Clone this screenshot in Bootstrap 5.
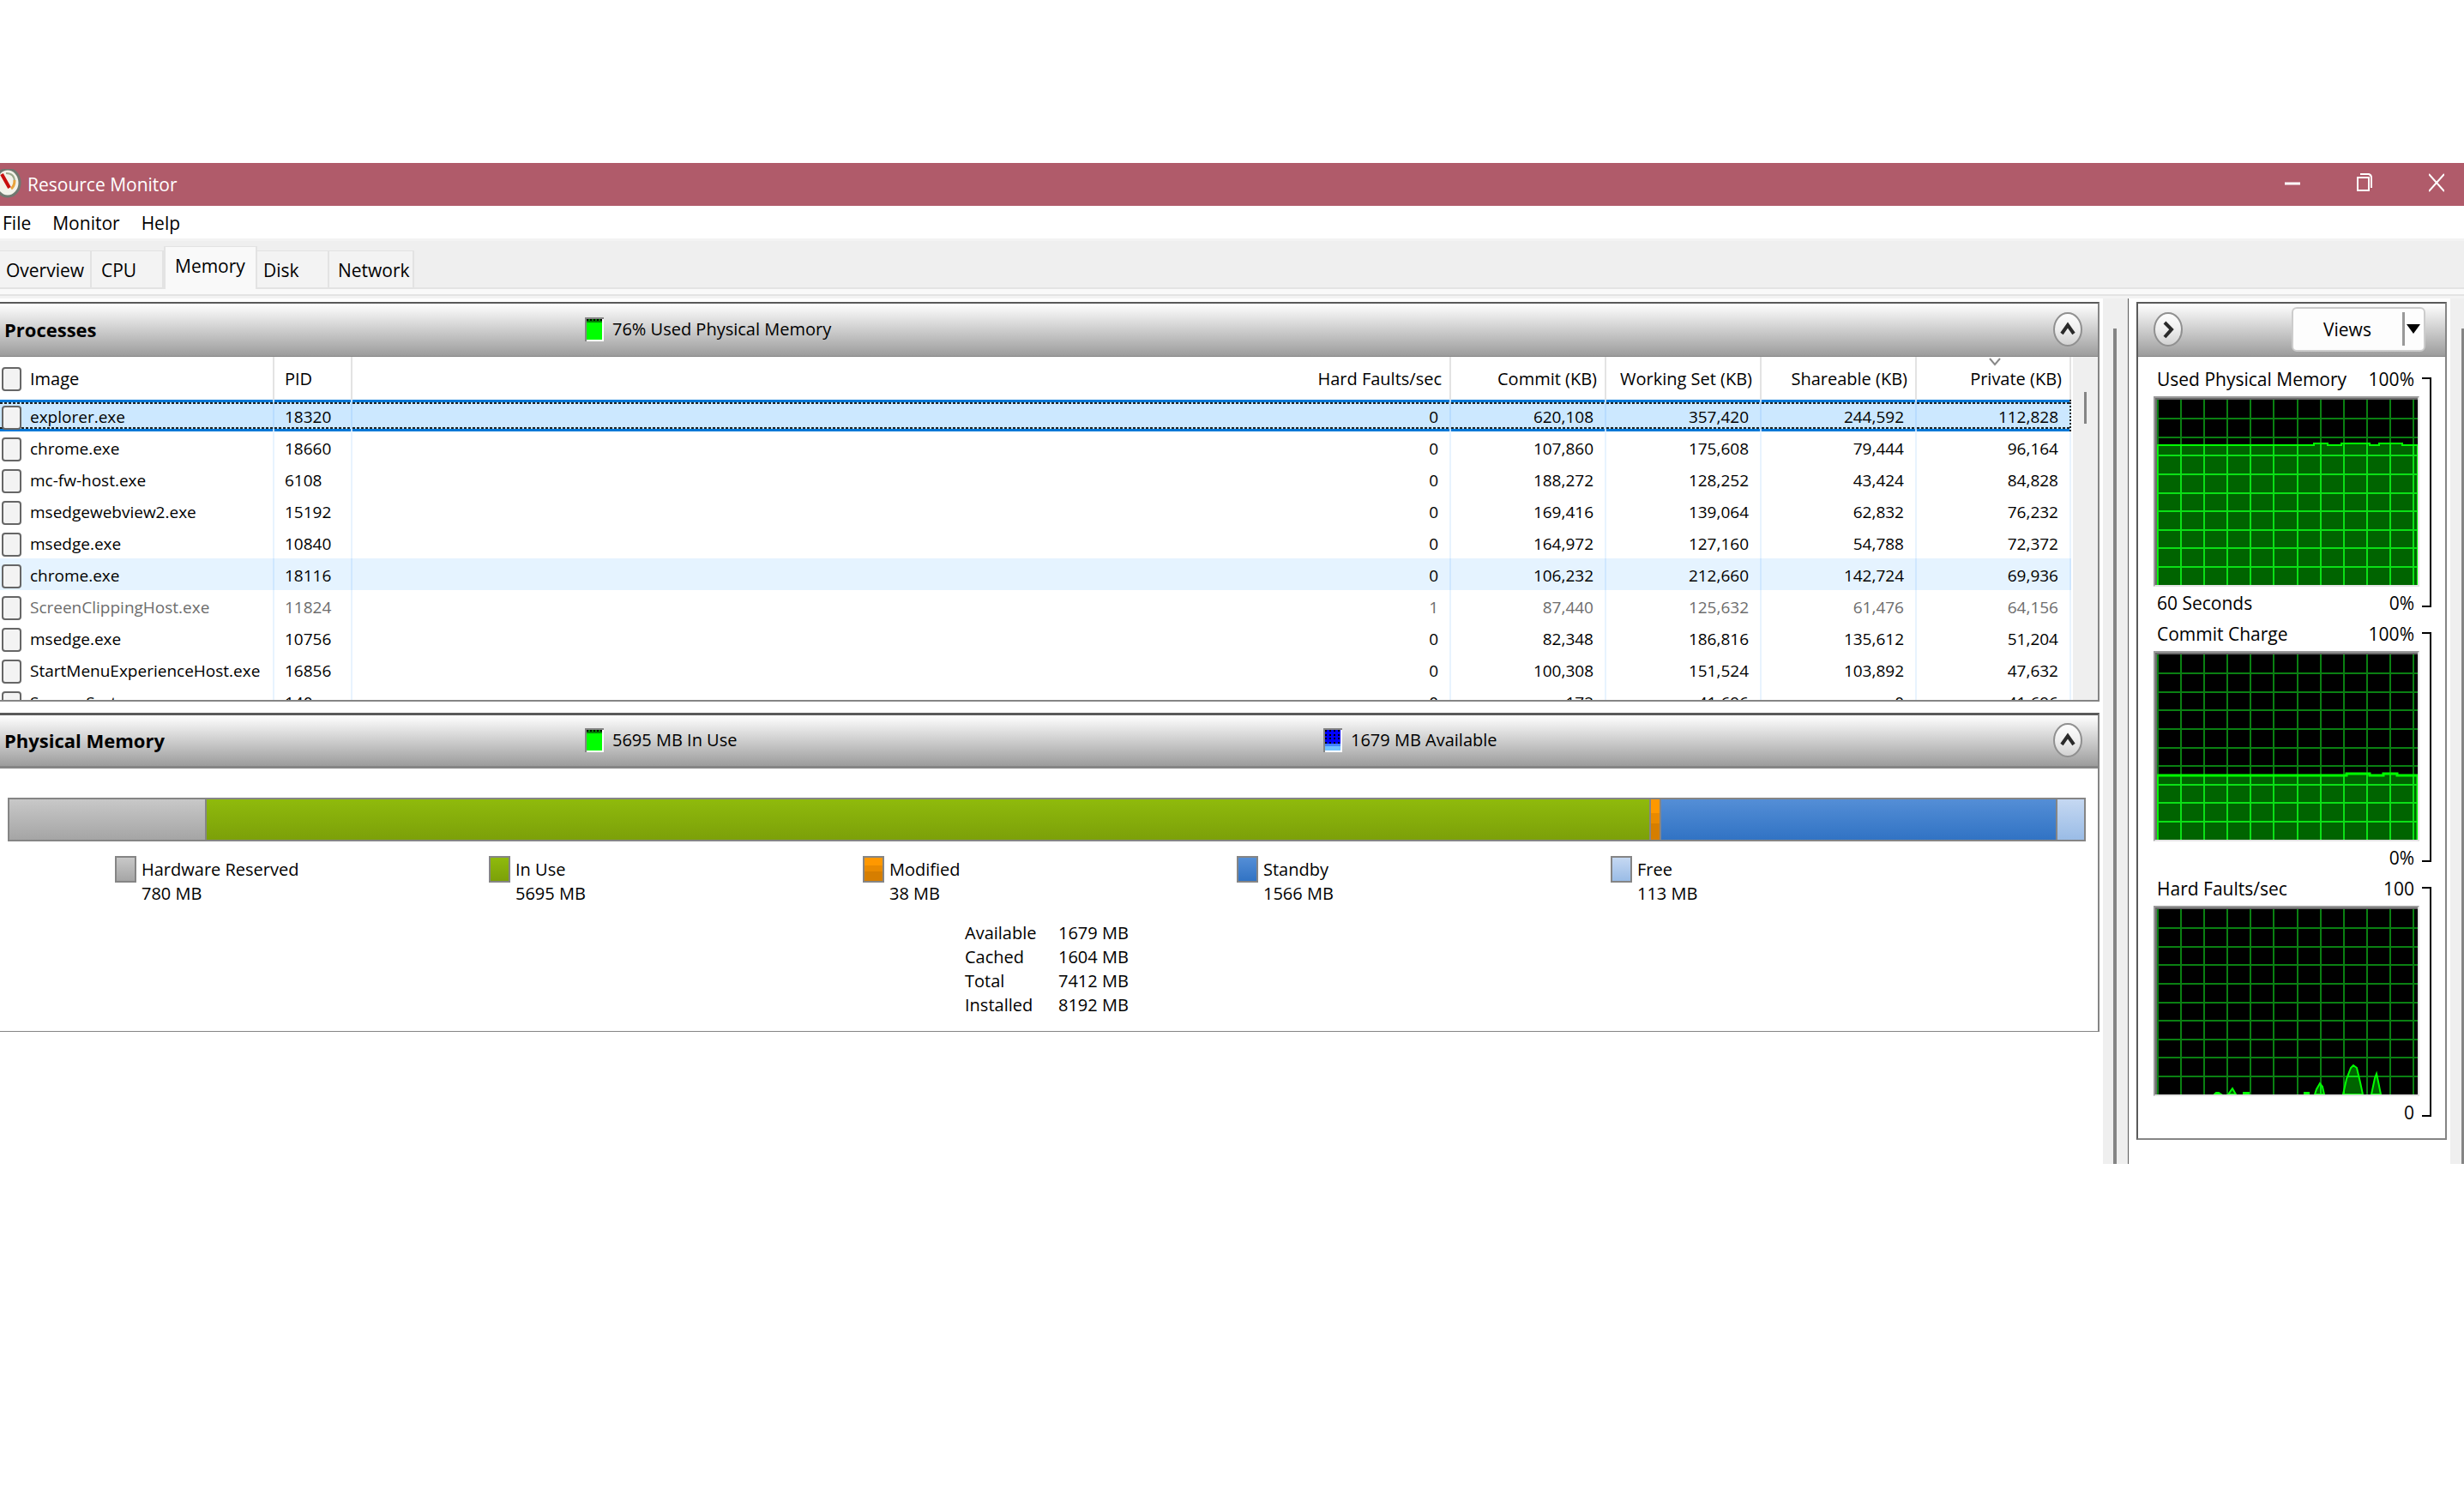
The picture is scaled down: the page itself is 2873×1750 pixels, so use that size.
<!DOCTYPE html>
<html lang="en">
<head>
<meta charset="utf-8">
<meta name="viewport" content="width=device-width, initial-scale=1">
<title>Resource Monitor</title>
<link href="https://cdn.jsdelivr.net/npm/bootstrap@5.3.0/dist/css/bootstrap.min.css" rel="stylesheet">
<style>
body{font-family:"Open Sans","Noto Sans",sans-serif;font-size:21px;line-height:28px;color:#000;background:#fff;padding-top:190px}
button,label{font:inherit;color:inherit}
/* title bar */
.titlebar{height:50px;background:#b05b6a;color:#fff}
.app-name{font-size:21px;padding-left:7px}
.app-logo{width:25px;height:36px}
.win-btns{gap:20px}
.win-btn{width:64px;height:46px;border:0;background:none;padding:0 0 8px}
/* menu and tabs */
.menubar{height:38px;padding:2px 0 0 3px;gap:25px}
.menubar a,.tabstrip a{color:#000;text-decoration:none}
.tabstrip{height:59px;background:#efefef;border-top:3px solid #f3f3f3}
.tabstrip a{height:45px;background:#f3f3f3;border:2px solid #e3e3e3;border-width:1px 2px 2px 0;padding:8px 0 0 7px}
.tabstrip a.current{height:50px;background:#f9f9f9;border-bottom:0;border-left-width:2px;padding:8px 11px 0}
.tabstrip .tail{height:2px;background:#e3e3e3}
.tab-edge{height:11px;background:#f9f9f9;border-bottom:3px solid #f3f3f3;box-shadow:inset 0 -2px #e3e3e3}
.w-overview{width:107px}.w-cpu{width:84px}.w-memory{width:109px}.w-disk{width:84px}.w-network{width:99px}
.tabstrip a.w-cpu{padding-left:11px}.tabstrip a.w-network{padding-left:10px}
/* panels */
.main-col{min-width:0;padding:4px 4px 0 0}
.pane{border:2px solid #858585;border-top:2px solid #5a5a5a}
.main-col .pane{border-left:0}
.pane-head{height:62px;background:linear-gradient(#fff,#9c9c9c);border-bottom:1px solid #858585;padding:0 18px 2px 0}
.pane-head h2{flex:none;font-size:22px;line-height:28px;font-weight:700;width:682px;margin:0;padding-left:5px}
.thick{margin-top:13px;border-top-width:3px;border-bottom-width:1px}
.thick .pane-head{border-bottom-width:3px}
.stat{flex:none;width:861px;gap:10px;font-size:20px}
.stat:nth-child(3){width:auto}
.round-btn{width:34px;height:40px;border:0;background:none;padding:0}
.round-btn svg,.stat svg{display:block}
.gutter{width:30px;background:#efefef;border-right:1px solid #5a5a5a;padding:35px 13px 0 12px}
.thumb{background:#858585;width:4px;flex:1 1 auto}
/* process table */
.list-clip{height:400px;overflow:hidden}
.procs{table-layout:fixed;border-collapse:separate;border-spacing:0;width:100%;font-size:19px}
.procs th{height:50px;font-weight:400;font-size:20px;padding:2px 9px 0 0;border-right:2px solid #e3e3e3;text-align:right;white-space:nowrap;position:relative}
.procs td{height:37px;padding:4px 13px 0 0;border-right:2px solid #e8f3fe;text-align:right;line-height:33px;white-space:nowrap}
.procs th:nth-child(1),.procs td:nth-child(1){text-align:left;padding-left:2px;padding-right:0}
.procs th:nth-child(2),.procs td:nth-child(2){text-align:left;padding-left:12px;padding-right:0}
.procs label{display:flex;align-items:center;gap:10px}
.procs input{appearance:none;flex:none;width:23px;height:28px;margin:0;border:2px solid #666;border-radius:4px;background:#f3f3f3}
.procs td label{height:33px}
.procs .picked td{background:repeating-linear-gradient(90deg,#222 0 3px,transparent 3px 5px) 0 3px/100% 2px no-repeat,repeating-linear-gradient(90deg,#222 0 3px,transparent 3px 5px) 0 calc(100% - 3px)/100% 2px no-repeat,#cce8ff;box-shadow:inset 0 3px #0078d7,inset 0 -3px #0078d7;border-right-color:#b8dcff}
.procs .picked td:last-child{border-right:2px dotted #222}
.procs .hovered td{background:#e5f3ff;border-right-color:#cfe7ff}
.procs .ended td{color:#6d6d6d}
.sort-mark{position:absolute;top:1px;left:84px}
.list-bar{width:29px;margin-left:2px;background:#efefef;padding:41px 13px 0}
.list-bar div{width:3px;height:37px;background:#858585}
/* physical memory */
.mem-body{padding:34px 14px 16px 9px;font-size:20px}
.mem-bar{height:51px;border:2px solid #858585}
.mem-bar div+div{border-left:2px solid #858585}
.c-hw{background:linear-gradient(#c8c8c8,#a5a5a5)}
.c-use{background:linear-gradient(#8fba0c,#7ca009)}
.c-mod{background:linear-gradient(#ff9800 0 33%,#e98a00 33% 60%,#d67e00 60%)}
.c-std{background:linear-gradient(#548ed6,#3173c4)}
.c-free{background:linear-gradient(#c5d8f2,#9abce6)}
.legend-row{padding:17px 0 0 125px}
.legend-item{width:436px;gap:6px}
.swatch{width:25px;height:31px;border:2px solid #858585}
.legend-item div{padding-top:2px}
.mem-facts{margin:18px auto 0 1116px}
.mem-facts td{padding:0}
.mem-facts td:first-child{width:109px}
/* graphs */
.side{width:375px;padding:4px 4px 28px 9px}
.side .pane{border-left-color:#5a5a5a}
.side .pane-head{padding:0 23px 2px 18px}
.views-btn{width:156px;height:52px;border:2px solid #ccc;border-radius:6px;background:#fdfdfd;padding:0 4px 0 35px}
.views-btn .bar{width:3px;height:39px;background:#999;margin-right:2px}
.graphs{padding:12px 0 16px 18px;gap:8px}
.graph{gap:3px}
.graph-main{width:310px}
.graph-label{padding:0 6px 0 4px;height:28px}
.plot{display:block;width:310px;height:222px;margin:6px 0 5px;border:2px solid #9a9a9a;border-right-color:#e3e3e3;border-bottom-color:#e3e3e3;background:#000}
.bracket{width:11px;height:268px;margin-top:12px;border:2px solid #000;border-left:0}
.edge-bar{width:16px;background:#efefef;padding-top:35px}
.edge-bar div{width:3px;background:#858585}
</style>
<script src="https://cdn.jsdelivr.net/npm/bootstrap@5.3.0/dist/js/bootstrap.bundle.min.js"></script>
</head>
<body>
<svg width="0" height="0" class="position-absolute" aria-hidden="true">
  <defs>
    <path id="grid" fill="none" stroke-width="2" d="M3 2V220M30 2V220M57 2V220M84 2V220M111 2V220M138 2V220M166 2V220M193 2V220M220 2V220M247 2V220M274 2V220M301 2V220M2 24H306M2 46H306M2 67H306M2 89H306M2 111H306M2 132H306M2 154H306M2 175H306M2 197H306"/>
    <path id="a1" d="M2 55H185V53H201V55H217V53H250V55H261V53H288V55H306V220H2Z"/>
    <path id="a2" d="M2 143H223V141H250V143H266V141H282V143H306V220H2Z"/>
    <path id="a3" d="M69 218L71 216L74 216L77 218ZM85 218L90 211L94 218ZM103 218V216H109V218ZM174 218V216H179V218ZM186 218L188 212L192 205L195 209L197 218ZM219 218L223 200L228 187L231 184L235 187L239 204L242 218ZM252 218L256 199L258 194L260 203L263 218Z"/>
    <clipPath id="k1"><use href="#a1"/></clipPath><clipPath id="k2"><use href="#a2"/></clipPath><clipPath id="k3"><use href="#a3"/></clipPath>
    <linearGradient id="rg" x2="0" y2="1"><stop offset="0" stop-color="#fff"/><stop offset=".5" stop-color="#eee"/><stop offset="1" stop-color="#d0d0d0"/></linearGradient>
    <symbol id="round" viewBox="0 0 34 40"><ellipse cx="17" cy="20" rx="16" ry="19" fill="url(#rg)" stroke="#909090" stroke-width="2"/></symbol>
    <symbol id="green" viewBox="0 0 22 28"><path fill="#fff" d="M0 0H22V28H0Z"/><path fill="#858585" d="M0 0H22V2H2V28H0Z"/><path fill="#0f0" d="M2 6H20V26H2Z"/><path fill="#008000" d="M2 2H20V6H2Z"/><path stroke="#000" stroke-width="2" stroke-dasharray="2 2" d="M2 3H20"/></symbol>
  </defs>
</svg>

<header>
  <div class="titlebar d-flex justify-content-between align-items-center">
    <div class="d-flex align-items-center">
      <svg class="app-logo" viewBox="0 0 25 36"><ellipse cx="9" cy="16" rx="14" ry="16" fill="#f3f2ea" stroke="#707870" stroke-width="3"/><path d="M7 5Q17 5 17 15" fill="none" stroke="#9aa88c" stroke-width="2"/><path d="M17 13Q17 20 13 23" fill="none" stroke="#e8a33c" stroke-width="3"/><path d="M2 6L11 22" stroke="#c80f0f" stroke-width="4"/></svg>
      <span class="app-name">Resource Monitor</span>
    </div>
    <div class="win-btns d-flex">
      <button class="win-btn" type="button" aria-label="Minimize"><svg width="18" height="22"><path d="M0 12H18" stroke="#fff" stroke-width="3"/></svg></button>
      <button class="win-btn" type="button" aria-label="Restore"><svg width="18" height="22" fill="none" stroke="#fff" stroke-width="2"><path d="M1 5H14V20H1ZM4 1H14Q17 2 17 5V17"/></svg></button>
      <button class="win-btn" type="button" aria-label="Close"><svg width="18" height="22" stroke="#fff" stroke-width="2"><path d="M0 1L18 21M18 1L0 21"/></svg></button>
    </div>
  </div>
  <nav class="menubar d-flex align-items-center"><a href="#">File</a><a href="#">Monitor</a><a href="#">Help</a></nav>
  <nav class="tabstrip d-flex align-items-end">
    <a class="w-overview" href="#">Overview</a><a class="w-cpu" href="#">CPU</a><a class="w-memory current" href="#">Memory</a><a class="w-disk" href="#">Disk</a><a class="w-network" href="#">Network</a><div class="tail flex-grow-1"></div>
  </nav>
  <div class="tab-edge"></div>
</header>

<main class="d-flex">
  <div class="main-col flex-grow-1">
    <section class="pane">
      <div class="pane-head d-flex align-items-center">
        <h2>Processes</h2>
        <div class="stat d-flex align-items-center"><svg width="22" height="28"><use href="#green"/></svg>76% Used Physical Memory</div>
        <button class="round-btn ms-auto" type="button" aria-label="Collapse"><svg width="34" height="40"><use href="#round"/><path d="M10 25L17 15L24 25" fill="none" stroke="#2a2a2a" stroke-width="4"/></svg></button>
      </div>
      <div class="list-clip d-flex">
        <div class="flex-grow-1">
        <table class="procs">
          <colgroup><col style="width:320px"><col style="width:91px"><col><col style="width:181px"><col style="width:181px"><col style="width:181px"><col style="width:180px"></colgroup>
          <thead><tr><th><label><input type="checkbox">Image</label></th><th>PID</th><th>Hard Faults/sec</th><th>Commit (KB)</th><th>Working Set (KB)</th><th>Shareable (KB)</th><th><svg class="sort-mark" width="14" height="10"><path d="M1 1L7 8L13 1" fill="none" stroke="#888" stroke-width="2"/></svg>Private (KB)</th></tr></thead>
          <tbody>
            <tr class="picked"><td><label><input type="checkbox">explorer.exe</label></td><td>18320</td><td>0</td><td>620,108</td><td>357,420</td><td>244,592</td><td>112,828</td></tr>
            <tr><td><label><input type="checkbox">chrome.exe</label></td><td>18660</td><td>0</td><td>107,860</td><td>175,608</td><td>79,444</td><td>96,164</td></tr>
            <tr><td><label><input type="checkbox">mc-fw-host.exe</label></td><td>6108</td><td>0</td><td>188,272</td><td>128,252</td><td>43,424</td><td>84,828</td></tr>
            <tr><td><label><input type="checkbox">msedgewebview2.exe</label></td><td>15192</td><td>0</td><td>169,416</td><td>139,064</td><td>62,832</td><td>76,232</td></tr>
            <tr><td><label><input type="checkbox">msedge.exe</label></td><td>10840</td><td>0</td><td>164,972</td><td>127,160</td><td>54,788</td><td>72,372</td></tr>
            <tr class="hovered"><td><label><input type="checkbox">chrome.exe</label></td><td>18116</td><td>0</td><td>106,232</td><td>212,660</td><td>142,724</td><td>69,936</td></tr>
            <tr class="ended"><td><label><input type="checkbox">ScreenClippingHost.exe</label></td><td>11824</td><td>1</td><td>87,440</td><td>125,632</td><td>61,476</td><td>64,156</td></tr>
            <tr><td><label><input type="checkbox">msedge.exe</label></td><td>10756</td><td>0</td><td>82,348</td><td>186,816</td><td>135,612</td><td>51,204</td></tr>
            <tr><td><label><input type="checkbox">StartMenuExperienceHost.exe</label></td><td>16856</td><td>0</td><td>100,308</td><td>151,524</td><td>103,892</td><td>47,632</td></tr>
            <tr><td><label><input type="checkbox">Secure System</label></td><td>140</td><td>0</td><td>172</td><td>41,696</td><td>0</td><td>41,696</td></tr>
          </tbody>
        </table>
        </div>
        <div class="list-bar flex-shrink-0"><div></div></div>
      </div>
    </section>

    <section class="pane thick">
      <div class="pane-head d-flex align-items-center">
        <h2>Physical Memory</h2>
        <div class="stat d-flex align-items-center"><svg width="22" height="28"><use href="#green"/></svg>5695 MB In Use</div>
        <div class="stat d-flex align-items-center"><svg width="22" height="28"><path fill="#fff" d="M0 0H22V28H0Z"/><path fill="#858585" d="M0 0H22V2H2V28H0Z"/><path fill="#00f" d="M2 2H20V18H2Z"/><path d="M2 3H20M2 8H20M2 12H20M2 17H20" stroke="#000" stroke-width="2" stroke-dasharray="2 3"/><path fill="#4080ff" d="M2 18H20V21H2Z"/><path fill="#70c0ff" d="M2 21H20V26H2Z"/></svg>1679 MB Available</div>
        <button class="round-btn ms-auto" type="button" aria-label="Collapse"><svg width="34" height="40"><use href="#round"/><path d="M10 25L17 15L24 25" fill="none" stroke="#2a2a2a" stroke-width="4"/></svg></button>
      </div>
      <div class="mem-body">
        <div class="mem-bar d-flex">
          <div class="c-hw" style="width:9.440%"></div><div class="c-use" style="width:69.620%"></div><div class="c-mod" style="width:.460%"></div><div class="c-std" style="width:19.130%"></div><div class="c-free" style="width:1.350%"></div>
        </div>
        <div class="legend-row d-flex">
          <div class="legend-item d-flex"><span class="swatch c-hw"></span><div>Hardware Reserved<br>780 MB</div></div>
          <div class="legend-item d-flex"><span class="swatch c-use"></span><div>In Use<br>5695 MB</div></div>
          <div class="legend-item d-flex"><span class="swatch c-mod"></span><div>Modified<br>38 MB</div></div>
          <div class="legend-item d-flex"><span class="swatch c-std"></span><div>Standby<br>1566 MB</div></div>
          <div class="legend-item d-flex"><span class="swatch c-free"></span><div>Free<br>113 MB</div></div>
        </div>
        <table class="mem-facts">
          <tr><td>Available</td><td>1679 MB</td></tr><tr><td>Cached</td><td>1604 MB</td></tr><tr><td>Total</td><td>7412 MB</td></tr><tr><td>Installed</td><td>8192 MB</td></tr>
        </table>
      </div>
    </section>
  </div>

  <div class="gutter d-flex flex-shrink-0"><div class="thumb"></div></div>

  <aside class="side flex-shrink-0">
    <section class="pane">
      <div class="pane-head d-flex align-items-center justify-content-between">
        <button class="round-btn" type="button" aria-label="Hide graphs"><svg width="34" height="40"><use href="#round"/><path d="M13 12L21 20L13 29" fill="none" stroke="#2a2a2a" stroke-width="4"/></svg></button>
        <button class="views-btn d-flex align-items-center" type="button">Views<span class="bar ms-auto"></span><svg width="16" height="11"><path d="M0 0H16L8 11Z"/></svg></button>
      </div>
      <div class="graphs d-flex flex-column">
        <div class="graph d-flex">
          <div class="graph-main">
            <div class="graph-label d-flex justify-content-between"><span>Used Physical Memory</span><span>100%</span></div>
            <svg class="plot" viewBox="0 0 306 218"><use href="#grid" stroke="#0a8012"/><g clip-path="url(#k1)"><use href="#a1" fill="#006400"/><use href="#grid" stroke="#0be016"/></g><use href="#a1" fill="none" stroke="#0f0" stroke-width="2"/><path d="M1 218V1H306" fill="none" stroke="#6a6a6a" stroke-width="2"/></svg>
            <div class="graph-label d-flex justify-content-between"><span>60 Seconds</span><span>0%</span></div>
          </div>
          <div class="bracket"></div>
        </div>
        <div class="graph d-flex">
          <div class="graph-main">
            <div class="graph-label d-flex justify-content-between"><span>Commit Charge</span><span>100%</span></div>
            <svg class="plot" viewBox="0 0 306 218"><use href="#grid" stroke="#0a8012"/><g clip-path="url(#k2)"><use href="#a2" fill="#006400"/><use href="#grid" stroke="#0be016"/></g><use href="#a2" fill="none" stroke="#0f0" stroke-width="3"/><path d="M1 218V1H306" fill="none" stroke="#6a6a6a" stroke-width="2"/></svg>
            <div class="graph-label text-end">0%</div>
          </div>
          <div class="bracket"></div>
        </div>
        <div class="graph d-flex">
          <div class="graph-main">
            <div class="graph-label d-flex justify-content-between"><span>Hard Faults/sec</span><span>100</span></div>
            <svg class="plot" viewBox="0 0 306 218"><use href="#grid" stroke="#0a8012"/><g clip-path="url(#k3)"><use href="#a3" fill="#006400"/><use href="#grid" stroke="#0be016"/></g><use href="#a3" fill="none" stroke="#0f0" stroke-width="2"/><path d="M1 218V1H306" fill="none" stroke="#6a6a6a" stroke-width="2"/></svg>
            <div class="graph-label text-end">0</div>
          </div>
          <div class="bracket"></div>
        </div>
      </div>
    </section>
  </aside>
  <div class="edge-bar d-flex justify-content-end flex-shrink-0"><div></div></div>
</main>
</body>
</html>
